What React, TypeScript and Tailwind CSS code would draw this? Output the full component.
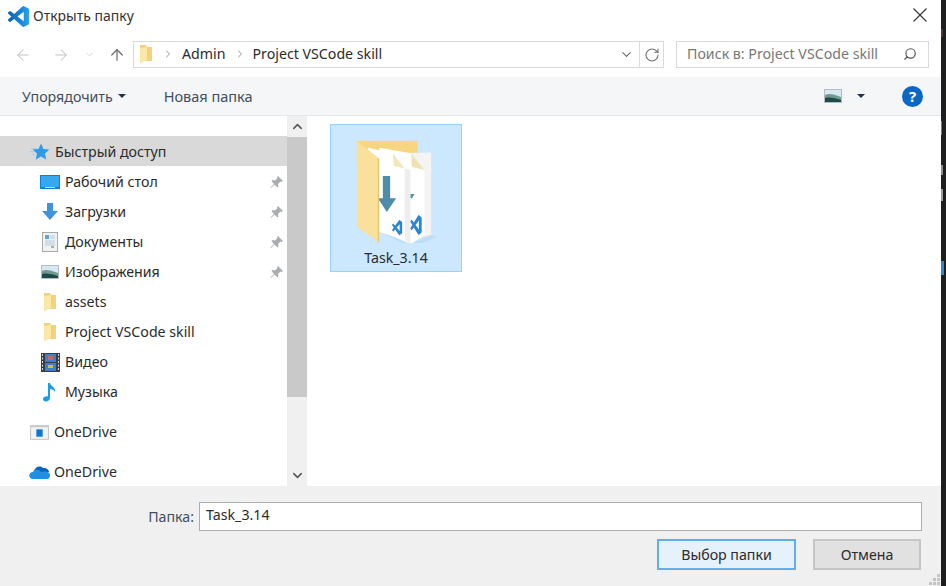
import React from 'react';
import { ArrowLeft, ArrowRight, ArrowUp, ChevronDown, ChevronRight, ChevronUp, RotateCw, Search } from 'lucide-react';

const VS_PATH =
  'M23.15 2.587 18.21.21a1.494 1.494 0 0 0-1.705.29l-9.46 8.63-4.12-3.128a.999.999 0 0 0-1.276.057L.327 7.261A1 1 0 0 0 .326 8.74L3.899 12 .326 15.26a1 1 0 0 0 .001 1.479L1.65 17.94a.999.999 0 0 0 1.276.057l4.12-3.128 9.46 8.63a1.492 1.492 0 0 0 1.704.29l4.942-2.377A1.5 1.5 0 0 0 24 20.06V3.939a1.5 1.500 0 0 0-.85-1.352zm-5.146 14.861L10.826 12l7.178-5.448v10.896z';

const VsCodeLogo = ({ size = 20 }: { size?: number }) => (
  <svg width={size} height={size} viewBox="0 0 24 24">
    <defs>
      <linearGradient id="vsBlue" x1="0" x2="1" y1="0" y2="0">
        <stop offset="0" stopColor="#0c63ad" />
        <stop offset="0.55" stopColor="#1481d6" />
        <stop offset="1" stopColor="#2ba3f0" />
      </linearGradient>
    </defs>
    <path fill="url(#vsBlue)" d={VS_PATH} />
  </svg>
);

const SmallFolder = () => (
  <svg width="14" height="20" viewBox="0 0 14 20">
    <path fill="#f2d27c" d="M1 1h6l1 2h5v14H5l-4 2V1Z" />
    <path fill="#fbe7a6" d="M1 4 8 3v13l-7 3V4Z" />
  </svg>
);

const QuickAccessIcon = () => (
  <svg width="20" height="20" viewBox="0 0 20 20">
    <path fill="#9fd0f0" d="M1 6h6v1H1zM0 9h4v1H0zM2 12h3v1H2z" />
    <path fill="#2f9be6" d="m11 1.500 2.500 5.400 5.900.7-4.400 4 1.200 5.900-5.200-3-5.200 3 1.200-5.900-4.400-4 5.900-.7z" />
  </svg>
);

const DesktopIcon = () => (
  <svg width="20" height="14" viewBox="0 0 20 14">
    <rect width="20" height="14" fill="#0f7fd0" />
    <rect x="1" y="1" width="18" height="11" fill="#35a8f0" />
    <rect x="5" y="12" width="10" height="1" fill="#b9def6" />
  </svg>
);

const DownloadIcon = () => (
  <svg width="18" height="18" viewBox="0 0 18 18">
    <path fill="#3f92dd" d="M6 0h6v8h5l-8 9-8-9h5V0Z" />
  </svg>
);

const DocumentsIcon = () => (
  <svg width="16" height="20" viewBox="0 0 16 20">
    <rect x=".5" y=".5" width="15" height="19" fill="#f2f2f2" stroke="#a9a9a9" />
    <rect x="3" y="3" width="4" height="4" fill="#57a6df" />
    <path stroke="#b5c9d8" d="M8 4h5M8 6h5M3 9h10M3 11h10M3 13h10" />
    <path stroke="#666" d="M9 15h3" />
  </svg>
);

const PicturesIcon = ({ width = 18, height = 14 }: { width?: number; height?: number }) => (
  <svg width={width} height={height} viewBox="0 0 18 14">
    <rect width="18" height="14" fill="#b7bcc0" />
    <rect x="1" y="1" width="16" height="12" fill="#d6e8f6" />
    <path fill="#6f9c8a" d="M1 6c4-2 8-1 16 2v5H1V6Z" />
    <path fill="#1d4a4f" d="M1 9c5-1 10 0 16 2v2H1V9Z" />
  </svg>
);

const VideoIcon = () => (
  <svg width="19" height="19" viewBox="0 0 19 19">
    <rect width="19" height="19" fill="#3d3d3d" />
    <rect x="4" y="1" width="11" height="8" fill="#3f7fd0" />
    <rect x="4" y="10" width="11" height="8" fill="#3f7fd0" />
    <rect x="7" y="3" width="5" height="4" fill="#d2664d" />
    <rect x="7" y="12" width="5" height="3" fill="#e0b34c" />
    <path stroke="#d8d8d8" strokeDasharray="2 1.500" d="M1.500 1v17M17.500 1v17" />
  </svg>
);

const MusicIcon = () => (
  <svg width="14" height="20" viewBox="0 0 14 20">
    <path fill="#1b9be8" d="M5 1h2c0 3 6 4 5 9-1-2-3-3-5-3v9c0 2-2 3.500-4 3.500S0 18.500 0 17c0-2 3-3 5-2.500V1Z" />
  </svg>
);

const OneDrivePcIcon = () => (
  <svg width="19" height="15" viewBox="0 0 18 14">
    <rect width="18" height="14" fill="#c7c7c7" />
    <rect x="1" y="2" width="16" height="11" fill="#f3f3f3" />
    <rect x="6" y="4" width="6" height="7" fill="#0f78d4" />
  </svg>
);

const CloudIcon = () => (
  <svg width="21" height="14" viewBox="0 0 21 14">
    <path fill="#0b63b8" d="M5 6c1-4 6-6 9-3 3-.5 6 1.500 6 4H8L5 6Z" />
    <path fill="#1e90e6" d="M4 14c-5 0-5-7 0-7 1-3 6-3 8 0 2-1 9-1 9 3 0 2-1 4-3 4H4Z" />
  </svg>
);

const Pin = () => (
  <svg width="13" height="13" viewBox="0 0 13 13">
    <path fill="#a9adb1" d="m8 0 5 5-1.500 1-1-.5L8 8l.5 2.500-1 1-3-3L1 12l-.5-.5L4 8 1.500 5l1-1L5 4.500 7.500 2 7 1l1-1Z" />
  </svg>
);

const navItems = [
  { label: 'Рабочий стол', icon: <DesktopIcon />, pinned: true },
  { label: 'Загрузки', icon: <DownloadIcon />, pinned: true },
  { label: 'Документы', icon: <DocumentsIcon />, pinned: true },
  { label: 'Изображения', icon: <PicturesIcon />, pinned: true },
  { label: 'assets', icon: <SmallFolder /> },
  { label: 'Project VSCode skill', icon: <SmallFolder /> },
  { label: 'Видео', icon: <VideoIcon /> },
  { label: 'Музыка', icon: <MusicIcon /> },
];

// coordinates below are in 3x units, hence the group scale
const FolderThumb = () => (
  <svg width="90" height="108" viewBox="0 0 90 108">
    <g transform="translate(-26.5 -15) scale(0.33333)">
      <path fill="#f6d67f" d="M97 62H280V130H97Z" />
      <path fill="#b9d3ea" d="M163 335 258 372 320 345 340 350 262 382Z" opacity=".6" />
      <path fill="#f4f4f4" d="M260 98H320V345L298 349 260 332Z" />
      <path fill="#ffffff" d="M165 83 260 100 300 150V346L258 372 165 330Z" />
      <path fill="#efe3b4" d="M260 100 300 150 262 140Z" />
      <path fill="#eeeeee" d="M240 145 258 150V372L240 360Z" />
      <path fill="#ffffff" d="M130 83 205 100 240 145V360L163 335Z" />
      <path fill="#f3e6b8" d="M205 100 240 145 208 138Z" />
      <path fill="#4f8cab" d="M175 168H197V235H215L187 276 160 235H175Z" />
      <path fill="#5a93ad" d="M258 222H270L262 236 258 232Z" />
      <g transform="translate(203 300) scale(1.250 1.900)">
        <path fill="#2a86d0" d={VS_PATH} />
      </g>
      <g transform="translate(258 285) scale(1.400 2.500)">
        <path fill="#2a86d0" d={VS_PATH} />
      </g>
      <path fill="#fae09a" d="M97 62 163 115V367L97 320Z" />
      <path fill="#e9c367" d="M160 113 164 116V368L160 365Z" />
    </g>
  </svg>
);

const Caret = ({ className }: { className: string }) => (
  <span className={`h-0 w-0 border-x-[4px] border-t-[4px] border-x-transparent border-t-[#1f3350] ${className}`} />
);

export default function App() {
  return (
    <div className="flex h-[586px] w-[946px] overflow-hidden bg-[#1e1e1e] font-['Noto_Sans','Open_Sans',sans-serif] text-[14.2px] text-[#2b2b2b]">
      <div className="flex w-[941px] flex-col bg-white">
        {/* Title bar */}
        <div className="flex h-[32px] shrink-0 items-center pl-[8px] pr-[14px]">
          <VsCodeLogo size={21} />
          <span className="ml-[4px] text-[14px] leading-none text-[#333]">Открыть папку</span>
          <svg width="14" height="14" viewBox="0 0 14 14" className="mb-[3px] ml-auto">
            <path stroke="#333" strokeWidth="1.100" d="M.5.5l13 13M13.500.5l-13 13" />
          </svg>
        </div>

        {/* Address row */}
        <div className="mt-[9px] flex h-[27px] shrink-0 items-center">
          <ArrowLeft size={18} strokeWidth={1.4} className="ml-[14px] text-[#c4c4c4]" />
          <ArrowRight size={18} strokeWidth={1.4} className="ml-[20px] text-[#c4c4c4]" />
          <ChevronDown size={11} strokeWidth={1.5} className="ml-[14px] text-[#c4c4c4]" />
          <ArrowUp size={18} strokeWidth={1.6} className="ml-[13px] text-[#6b6b6b]" />
          <div className="ml-[7px] flex h-[27px] w-[531px] items-center border border-[#d9d9d9] pb-[1px]">
            <div className="ml-[5px] flex"><SmallFolder /></div>
            <ChevronRight size={12} strokeWidth={1.6} className="ml-[9px] text-[#777]" />
            <span className="ml-[8px]">Admin</span>
            <ChevronRight size={12} strokeWidth={1.6} className="ml-[8px] text-[#777]" />
            <span className="ml-[7px]">Project VSCode skill</span>
            <ChevronDown size={15} strokeWidth={1.8} className="ml-auto mr-[5px] text-[#6b6b6b]" />
            <div className="-mb-[1px] flex h-[25px] w-[24px] items-center justify-center border-l border-[#d9d9d9]">
              <RotateCw size={16} strokeWidth={1.6} className="text-[#707070]" />
            </div>
          </div>
          <div className="ml-[12px] flex h-[27px] w-[253px] items-center justify-between border border-[#d9d9d9] pb-[1px] pl-[10px] pr-[11px]">
            <span className="text-[#777]">Поиск в: Project VSCode skill</span>
            <Search size={14} strokeWidth={2} className="-scale-x-100 text-[#555]" />
          </div>
        </div>

        {/* Toolbar */}
        <div className="mt-[9px] flex h-[39px] shrink-0 items-center border-b border-[#e6e7e8] bg-[#f5f6f7] pl-[22px] text-[#3e4e60]">
          <span className="mt-[2px]">Упорядочить</span>
          <Caret className="ml-[5px]" />
          <span className="ml-[38px] mt-[2px] text-[14.5px]">Новая папка</span>
          <div className="ml-auto flex"><PicturesIcon width={18} height={14} /></div>
          <Caret className="ml-[15px]" />
          <span className="ml-[37px] mr-[18px] flex h-[21px] w-[21px] items-center justify-center rounded-full bg-[#0a68c4] text-[15px] font-bold leading-none text-white">?</span>
        </div>

        {/* Main */}
        <div className="flex min-h-0 flex-1">
          <div className="flex w-[287px] shrink-0 flex-col pt-[20px]">
            <div className="flex h-[30px] shrink-0 items-center bg-[#d9d9d9] pl-[30px] pt-[2px]">
              <QuickAccessIcon />
              <span className="ml-[5px]">Быстрый доступ</span>
            </div>
            {navItems.map((item) => (
              <div key={item.label} className="flex h-[30px] shrink-0 items-center pl-[40px] pr-[4px] pt-[2px]">
                <span className="flex w-[20px] justify-center">{item.icon}</span>
                <span className="ml-[5px]">{item.label}</span>
                {item.pinned && <span className="ml-auto flex"><Pin /></span>}
              </div>
            ))}
            <div className="mt-[10px] flex h-[30px] shrink-0 items-center pl-[30px] pt-[2px]">
              <OneDrivePcIcon />
              <span className="ml-[5px]">OneDrive</span>
            </div>
            <div className="mt-[10px] flex h-[30px] shrink-0 items-center pl-[29px] pt-[2px]">
              <CloudIcon />
              <span className="ml-[4px]">OneDrive</span>
            </div>
          </div>

          {/* Scrollbar */}
          <div className="flex w-[20px] shrink-0 flex-col bg-[#f0f0f0]">
            <div className="flex h-[21px] shrink-0 items-center justify-center">
              <ChevronUp size={15} strokeWidth={2.4} className="text-[#555]" />
            </div>
            <div className="h-[260px] shrink-0 bg-[#c9c9c9]" />
            <div className="mt-auto flex h-[21px] items-center justify-center">
              <ChevronDown size={15} strokeWidth={2.4} className="text-[#555]" />
            </div>
          </div>

          {/* Files */}
          <div className="flex-1 pl-[23px] pt-[8px]">
            <div className="flex h-[148px] w-[132px] flex-col items-center border border-[#99d1ff] bg-[#cce8ff] pt-[10px]">
              <FolderThumb />
              <span className="mt-[5px] leading-[20px]">Task_3.14</span>
            </div>
          </div>
        </div>

        {/* Footer */}
        <div className="relative flex h-[100px] shrink-0 flex-col bg-[#f0f0f0]">
          <div className="mt-[16px] flex items-center justify-end pr-[19px]">
            <span className="mr-[5px] text-[#3e4e60]">Папка:</span>
            <div className="flex h-[29px] w-[723px] items-center border border-[#adadad] bg-white pb-[3px] pl-[6px]">Task_3.14</div>
          </div>
          <div className="mt-[8px] flex justify-end gap-[17px] pr-[20px]">
            <button className="h-[31px] w-[139px] border-2 border-[#62aee8] bg-[#e5f1fb] text-[#2b2b2b]">Выбор папки</button>
            <button className="h-[31px] w-[108px] border-2 border-[#c6c6c6] bg-[#e1e1e1] text-[#2b2b2b]">Отмена</button>
          </div>
          {/* resize grip */}
          <svg width="11" height="11" viewBox="0 0 11 11" className="absolute bottom-[1px] right-[1px]">
            <path fill="#c4c4c4" d="M8 0h3v3H8zM4 4h3v3H4zM8 4h3v3H8zM0 8h3v3H0zM4 8h3v3H4zM8 8h3v3H8z" />
          </svg>
        </div>
      </div>
      {/* sliver of the editor behind the dialog */}
      <div className="flex flex-1 flex-col bg-[#1e1e1e]">
        <div className="mt-[29px] h-[8px] w-[2px] bg-[#4a3a36]" />
        <div className="mt-[84px] h-[14px] w-[1px] bg-[#77777a]" />
        <div className="mt-[30px] h-[10px] w-[2px] bg-[#8a8a8a]" />
        <div className="mt-[14px] h-[12px] w-[2px] bg-[#9a9a9a]" />
        <div className="mt-[60px] h-[14px] w-[3px] bg-[#2b86d6]" />
      </div>
    </div>
  );
}
